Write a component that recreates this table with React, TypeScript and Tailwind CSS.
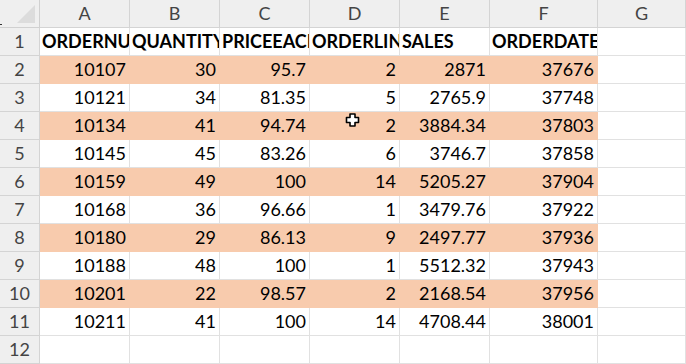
import React from "react";

const cols = ["A", "B", "C", "D", "E", "F", "G"];
const headers = ["ORDERNUMBER", "QUANTITYORDERED", "PRICEEACH", "ORDERLINENUMBER", "SALES", "ORDERDATE", ""];
const data: (string | number)[][] = [
  [10107, 30, 95.7, 2, 2871, 37676],
  [10121, 34, 81.35, 5, 2765.9, 37748],
  [10134, 41, 94.74, 2, 3884.34, 37803],
  [10145, 45, 83.26, 6, 3746.7, 37858],
  [10159, 49, 100, 14, 5205.27, 37904],
  [10168, 36, 96.66, 1, 3479.76, 37922],
  [10180, 29, 86.13, 9, 2497.77, 37936],
  [10188, 48, 100, 1, 5512.32, 37943],
  [10201, 22, 98.57, 2, 2168.54, 37956],
  [10211, 41, 100, 14, 4708.44, 38001],
];

export default function App() {
  return (
    <div
      className="relative w-[686px] h-[364px] overflow-hidden bg-white text-black"
      style={{ fontFamily: "Lato, 'Open Sans', sans-serif" }}
    >
      <div className="grid grid-cols-[40px_90px_90px_90px_90px_90px_108px_1fr] auto-rows-[28px]">
        {/* corner */}
        <div className="relative bg-[#efefef] border-r border-b border-[#d0d0d0]">
          <svg className="absolute left-[17px] top-[5px]" width="18" height="18" viewBox="0 0 18 18">
            <polygon points="18,0 18,18 0,18" fill="#dcdcdc" />
          </svg>
          <div className="absolute left-0 top-[24px] w-[2px] h-[1px] bg-[#333]" />
        </div>
        {cols.map((c) => (
          <div
            key={c}
            className="flex items-center justify-center bg-[#efefef] border-r border-b border-[#d4d4d4] text-[18px] text-[#444]"
          >
            {c}
          </div>
        ))}
        {/* row 1 */}
        <div className="flex items-center justify-center bg-[#efefef] border-r border-b border-[#d4d4d4] text-[18px] text-[#444]">
          1
        </div>
        {headers.map((h, i) => (
          <div
            key={i}
            className="flex items-center overflow-hidden whitespace-nowrap border-r border-b border-[#e1e1e1] pl-[2px] text-[18px] font-bold"
          >
            {h}
          </div>
        ))}
        {data.map((row, r) => {
          const rowNum = r + 2;
          const orange = rowNum % 2 === 0;
          return (
            <React.Fragment key={r}>
              <div className="flex items-center justify-center bg-[#efefef] border-r border-b border-[#d4d4d4] text-[18px] text-[#444]">
                {rowNum}
              </div>
              {row.map((v, i) => (
                <div
                  key={i}
                  className={
                    orange
                      ? "flex items-center justify-end bg-[#f8cbad] border-r border-b border-[#f8cbad] pr-[3px] text-[18px]"
                      : "flex items-center justify-end border-r border-b border-[#e1e1e1] pr-[3px] text-[18px]"
                  }
                >
                  {v}
                </div>
              ))}
              <div className="border-r border-b border-[#e1e1e1]" />
            </React.Fragment>
          );
        })}
        <div className="flex items-center justify-center bg-[#efefef] border-r border-b border-[#d4d4d4] text-[18px] text-[#444]">
          12
        </div>
        {cols.map((c) => (
          <div key={c} className="border-r border-b border-[#e1e1e1]" />
        ))}
      </div>
      {/* cursor */}
      <svg className="absolute left-[345px] top-[113px]" width="15" height="14" viewBox="0 0 15 14">
        <path
          d="M5 1 H10 V4.5 H13.5 V9.5 H10 V13 H5 V9.5 H1.5 V4.5 H5 Z"
          fill="white"
          stroke="black"
          strokeWidth="1.6"
          strokeLinejoin="round"
        />
      </svg>
    </div>
  );
}
